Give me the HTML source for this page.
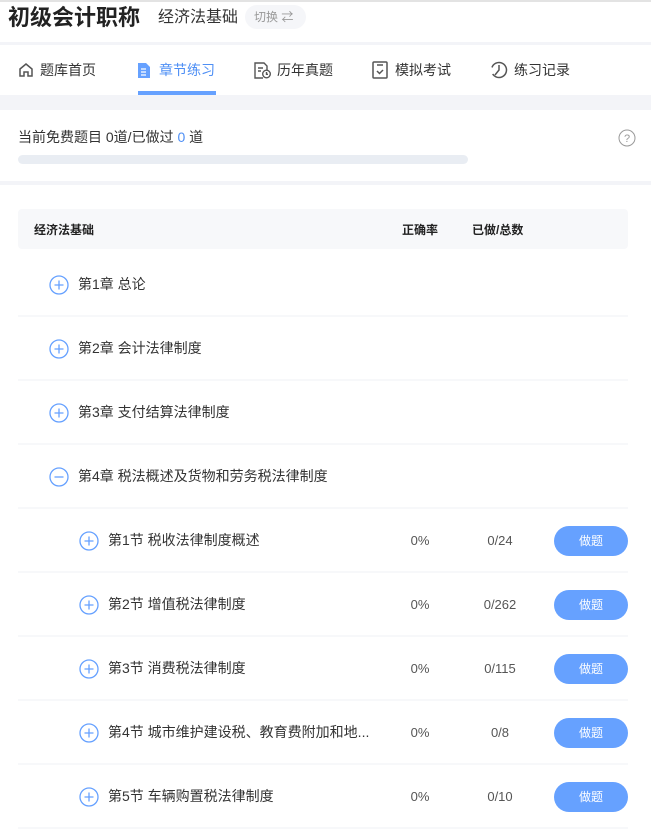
<!DOCTYPE html>
<html><head><meta charset="utf-8"><style>
*{margin:0;padding:0;box-sizing:border-box}
body{width:651px;height:830px;overflow:hidden;background:#fff;font-family:"Liberation Sans","Noto Sans CJK SC",sans-serif;color:#333;position:relative}
.a{position:absolute}
.t{font-size:14px;white-space:nowrap;line-height:18px}
.sep{position:absolute;left:18px;width:610px;height:2px;background:#f7f8fa}
.btn{position:absolute;left:554px;width:74px;height:30px;border-radius:15px;background:#66a1ff;color:#fff;font-size:12px;text-align:center;line-height:30px}
</style></head><body>
<div class="a" style="left:0;top:0;width:651px;height:2px;background:#e3e3e3"></div>
<div class="a" style="left:8px;top:4px;font-size:22px;line-height:28px;font-weight:bold;color:#222">初级会计职称</div>
<div class="a" style="left:158px;top:7px;font-size:16px;line-height:22px;color:#333">经济法基础</div>
<div class="a" style="left:245px;top:5px;width:61px;height:24px;border-radius:12px;background:#f5f6f9;color:#999;font-size:12px;line-height:24px;padding-left:9px">切换 ⇄</div>
<div class="a" style="left:0;top:42px;width:651px;height:3px;background:#f3f4f8"></div>
<!-- nav -->
<svg class="a" style="left:18px;top:62px" width="16" height="16" viewBox="0 0 16 16" fill="none" stroke="#555" stroke-width="1.5"><path d="M2 7L8 2l6 5v7h-4v-4H6v4H2z"/></svg>
<div class="a t" style="left:40px;top:61px;color:#333">题库首页</div>
<svg class="a" style="left:137px;top:62px" width="14" height="17" viewBox="0 0 14 17"><path d="M1 1h8l4 4v11H1z" fill="#66a1ff"/><path d="M4 7h5M4 10h5M4 13h5" stroke="#fff" stroke-width="1.3"/></svg>
<div class="a t" style="left:159px;top:61px;color:#4e8ff5">章节练习</div>
<div class="a" style="left:138px;top:91px;width:78px;height:4px;background:#66a1ff"></div>
<svg class="a" style="left:254px;top:62px" width="18" height="17" viewBox="0 0 18 17" fill="none" stroke="#555" stroke-width="1.4"><path d="M9 16H1V1h9l3 3v4"/><path d="M4 6h5M4 9h3"/><circle cx="12.5" cy="12" r="3.8"/><path d="M12.5 10v2.3h1.5"/></svg>
<div class="a t" style="left:277px;top:61px">历年真题</div>
<svg class="a" style="left:372px;top:61px" width="16" height="18" viewBox="0 0 16 18" fill="none" stroke="#555" stroke-width="1.5"><rect x="1" y="1" width="14" height="16" rx="1"/><path d="M5 4h6M5 10l2.5 2.5L11 9"/></svg>
<div class="a t" style="left:395px;top:61px">模拟考试</div>
<svg class="a" style="left:490px;top:61px" width="18" height="18" viewBox="0 0 18 18" fill="none" stroke="#555" stroke-width="1.5"><circle cx="9" cy="9" r="7.5" stroke-dasharray="40 8" transform="rotate(200 9 9)"/><path d="M9 4v5l-4 5"/></svg>
<div class="a t" style="left:514px;top:61px">练习记录</div>
<div class="a" style="left:0;top:95px;width:651px;height:15px;background:#f3f4f8"></div>
<div class="a t" style="left:18px;top:128px">当前免费题目 0道/已做过 <span style="color:#4e8ff5">0</span> 道</div>
<svg class="a" style="left:618px;top:129px" width="18" height="18" viewBox="0 0 18 18" fill="none" stroke="#999" stroke-width="1"><circle cx="9" cy="9" r="8"/><text x="9" y="13" font-size="11" text-anchor="middle" fill="#999" stroke="none" font-family="Liberation Sans">?</text></svg>
<div class="a" style="left:18px;top:155px;width:450px;height:9px;border-radius:5px;background:#e9edf3"></div>
<div class="a" style="left:0;top:181px;width:651px;height:4px;background:#f3f4f8"></div>
<div class="a" style="left:18px;top:209px;width:610px;height:40px;border-radius:4px;background:#f7f8fa"></div>
<div class="a" style="left:34px;top:221px;font-size:12px;font-weight:bold;color:#222">经济法基础</div>
<div class="a" style="left:402px;top:221px;font-size:12px;font-weight:bold;color:#222">正确率</div>
<div class="a" style="left:472px;top:221px;font-size:12px;font-weight:bold;color:#222">已做/总数</div>
<div id="rows"></div>
<script>
var rows=[["第1章 总论",0],["第2章 会计法律制度",0],["第3章 支付结算法律制度",0],["第4章 税法概述及货物和劳务税法律制度",2],["第1节 税收法律制度概述",1,"0/24"],["第2节 增值税法律制度",1,"0/262"],["第3节 消费税法律制度",1,"0/115"],["第4节 城市维护建设税、教育费附加和地...",1,"0/8"],["第5节 车辆购置税法律制度",1,"0/10"]];
var h="";rows.forEach(function(r,i){var c=285+64*i;var sub=r[1]==1;var ix=sub?79:49;
h+='<svg class="a" style="left:'+ix+'px;top:'+(c-10)+'px" width="20" height="20" viewBox="0 0 20 20" fill="none" stroke="#66a1ff" stroke-width="1.3"><circle cx="10" cy="10" r="9"/><path d="M5.5 10h9'+(r[1]==2?'':'M10 5.5v9')+'"/></svg>';
h+='<div class="a t" style="left:'+(ix+29)+'px;top:'+(c-10)+'px">'+r[0]+'</div>';
if(sub){h+='<div class="a" style="left:400px;width:40px;text-align:center;top:'+(c-8)+'px;font-size:13px;line-height:16px;color:#555">0%</div>';
h+='<div class="a" style="left:470px;width:60px;text-align:center;top:'+(c-8)+'px;font-size:13px;line-height:16px;color:#555">'+r[2]+'</div>';
h+='<div class="btn" style="top:'+(c-15)+'px">做题</div>';}
h+='<div class="sep" style="top:'+(c+30)+'px"></div>';});
document.getElementById("rows").innerHTML=h;
</script>
</body></html>
